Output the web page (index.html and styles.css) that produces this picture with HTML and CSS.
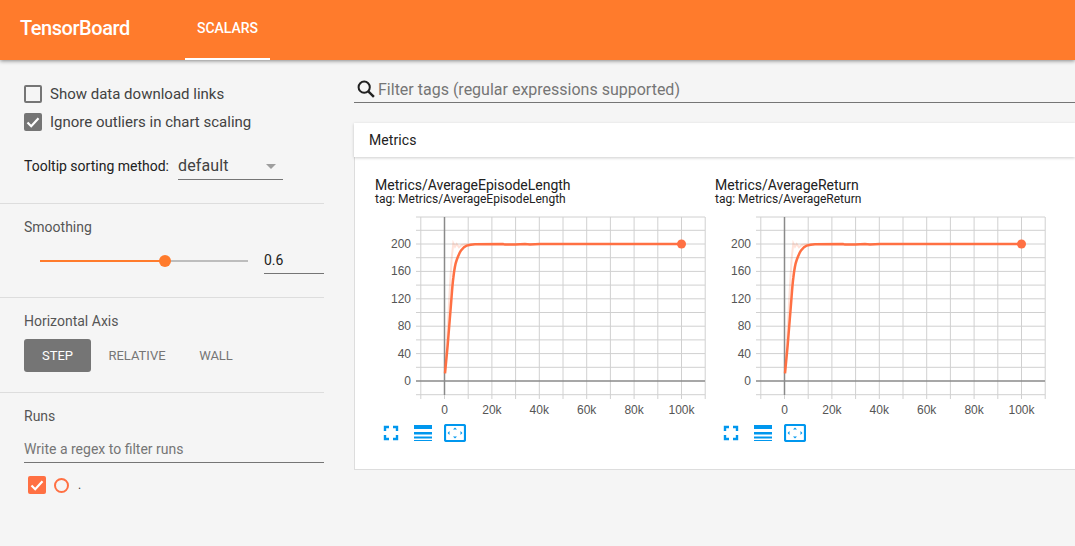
FILE: index.html
```html
<!DOCTYPE html>
<html lang="en">
<head>
    <meta charset="UTF-8">
    <title>TensorBoard</title>
    <link rel="stylesheet" href="styles.css">
</head>
<body>
    <!-- Top bar -->
    <header class="topbar">
        <div class="brand">TensorBoard</div>
        <div class="tab">SCALARS</div>
    </header>

    <div class="page">
        <!-- Sidebar -->
        <aside class="sidebar">
            <section class="side-section options">
                <label class="check-row">
                    <span class="box"></span>
                    <span>Show data download links</span>
                </label>
                <label class="check-row">
                    <span class="box checked">
                        <svg viewBox="0 0 18 18" width="18" height="18"><path d="M3.5 9.5l3.7 3.7 7.3-8" fill="none" stroke="#fff" stroke-width="2.2"/></svg>
                    </span>
                    <span>Ignore outliers in chart scaling</span>
                </label>
                <div class="tooltip-row">
                    <span>Tooltip sorting method:</span>
                    <div class="select">
                        <span>default</span>
                        <span class="arrow"></span>
                    </div>
                </div>
            </section>

            <section class="side-section smoothing">
                <div class="side-title">Smoothing</div>
                <div class="slider-row">
                    <div class="slider">
                        <div class="slider-fill"></div>
                        <div class="slider-knob"></div>
                    </div>
                    <div class="slider-value">0.6</div>
                </div>
            </section>

            <section class="side-section axis">
                <div class="side-title">Horizontal Axis</div>
                <div class="axis-buttons">
                    <div class="axis-btn active">STEP</div>
                    <div class="axis-btn relative">RELATIVE</div>
                    <div class="axis-btn wall">WALL</div>
                </div>
            </section>

            <section class="side-section runs">
                <div class="side-title">Runs</div>
                <div class="runs-filter">Write a regex to filter runs</div>
                <div class="run-row">
                    <span class="run-box">
                        <svg viewBox="0 0 18 18" width="18" height="18"><path d="M3.5 9.5l3.7 3.7 7.3-8" fill="none" stroke="#fff" stroke-width="2.2"/></svg>
                    </span>
                    <span class="run-dot"></span>
                    <span class="run-name">.</span>
                </div>
            </section>
        </aside>

        <!-- Main -->
        <main class="main">
            <div class="filter-bar">
                <svg class="search-icon" viewBox="0 0 20 20" width="20" height="20"><circle cx="8.2" cy="8.2" r="5.6" fill="none" stroke="#212121" stroke-width="2"/><path d="M12.3 12.3l5.6 5.6" stroke="#212121" stroke-width="2.4"/></svg>
                <span>Filter tags (regular expressions supported)</span>
            </div>

            <div class="card-head">Metrics</div>
            <div class="card-body">
                <div class="chart">
                    <div class="chart-title">Metrics/AverageEpisodeLength</div>
                    <div class="chart-tag">tag: Metrics/AverageEpisodeLength</div>
                    <svg class="plot" viewBox="0 0 340 196" width="340" height="196">
                        <path class="grid" d="M45.8 5V187M69.5 5V187M93.2 5V187M116.9 5V187M140.6 5V187M164.3 5V187M188 5V187M211.7 5V187M235.4 5V187M259.1 5V187M282.8 5V187M306.5 5V187M330.2 5V187M41 5H330M41 18.3H330M41 32H330M41 45.7H330M41 59.4H330M41 73.1H330M41 86.8H330M41 100.5H330M41 114.2H330M41 127.9H330M41 141.6H330M41 155.3H330M41 182.7H330"/>
                        <path class="axis-line" d="M69.5 5V183M41 169H330"/>
                        <path class="raw" d="M70 161.3L72.5 120 75 73 76.7 46 78.3 31.3 80 34.7 81.7 32 84 35.3 86.7 33 90 32.5 100 32 128 32 130 32.8 135 32.4 150 32 306.5 32"/>
                        <path class="line" d="M70 161.3L72.7 133 75.7 96C76.8 83 77.2 74 78.3 66 79.2 58 80.2 52 81.7 48 83 44.5 84.5 40.5 86 38.5 88 36 89.5 34.5 91.7 33.7 94 32.9 97 32.3 100 32.2L128 32 130 32.6 140 32.4 150 32 155 32.4 165 32 306.5 32"/>
                        <circle class="end-dot" cx="306.5" cy="32" r="4.5"/>
                        <g class="y-labels">
                            <text x="36" y="36">200</text>
                            <text x="36" y="63">160</text>
                            <text x="36" y="91">120</text>
                            <text x="36" y="118">80</text>
                            <text x="36" y="145.5">40</text>
                            <text x="36" y="173">0</text>
                        </g>
                        <g class="x-labels">
                            <text x="69.5" y="202">0</text>
                            <text x="116.9" y="202">20k</text>
                            <text x="164.3" y="202">40k</text>
                            <text x="211.7" y="202">60k</text>
                            <text x="259.1" y="202">80k</text>
                            <text x="306.5" y="202">100k</text>
                        </g>
                    </svg>
                    <div class="chart-tools">
                        <svg class="tool tool-full" viewBox="0 0 16 16" width="16" height="16"><path d="M2 6V2H6M10 2H14V6M14 10V14H10M6 14H2V10" fill="none" stroke="#0097ee" stroke-width="2.4"/></svg>
                        <svg class="tool" viewBox="0 0 18 16" width="18" height="16"><path d="M0 0H18V4H0ZM0 7H18V9.5H0ZM0 11.5H18V13.5H0ZM0 15H18V16H0Z" fill="#0097ee"/></svg>
                        <svg class="tool" viewBox="0 0 22 18" width="22" height="18"><rect x="1" y="1" width="20" height="16" rx="1.5" fill="none" stroke="#0097ee" stroke-width="2.2"/><path d="M9 5.5L11 3.6 13 5.5ZM9 12.5L11 14.4 13 12.5ZM5.5 7L3.6 9 5.5 11ZM16.5 7L18.4 9 16.5 11Z" fill="#0097ee"/></svg>
                    </div>
                </div>

                <div class="chart">
                    <div class="chart-title">Metrics/AverageReturn</div>
                    <div class="chart-tag">tag: Metrics/AverageReturn</div>
                    <svg class="plot" viewBox="0 0 340 196" width="340" height="196">
                        <path class="grid" d="M45.8 5V187M69.5 5V187M93.2 5V187M116.9 5V187M140.6 5V187M164.3 5V187M188 5V187M211.7 5V187M235.4 5V187M259.1 5V187M282.8 5V187M306.5 5V187M330.2 5V187M41 5H330M41 18.3H330M41 32H330M41 45.7H330M41 59.4H330M41 73.1H330M41 86.8H330M41 100.5H330M41 114.2H330M41 127.9H330M41 141.6H330M41 155.3H330M41 182.7H330"/>
                        <path class="axis-line" d="M69.5 5V183M41 169H330"/>
                        <path class="raw" d="M70 161.3L72.5 120 75 73 76.7 46 78.3 31.3 80 34.7 81.7 32 84 35.3 86.7 33 90 32.5 100 32 128 32 130 32.8 135 32.4 150 32 306.5 32"/>
                        <path class="line" d="M70 161.3L72.7 133 75.7 96C76.8 83 77.2 74 78.3 66 79.2 58 80.2 52 81.7 48 83 44.5 84.5 40.5 86 38.5 88 36 89.5 34.5 91.7 33.7 94 32.9 97 32.3 100 32.2L128 32 130 32.6 140 32.4 150 32 155 32.4 165 32 306.5 32"/>
                        <circle class="end-dot" cx="306.5" cy="32" r="4.5"/>
                        <g class="y-labels">
                            <text x="36" y="36">200</text>
                            <text x="36" y="63">160</text>
                            <text x="36" y="91">120</text>
                            <text x="36" y="118">80</text>
                            <text x="36" y="145.5">40</text>
                            <text x="36" y="173">0</text>
                        </g>
                        <g class="x-labels">
                            <text x="69.5" y="202">0</text>
                            <text x="116.9" y="202">20k</text>
                            <text x="164.3" y="202">40k</text>
                            <text x="211.7" y="202">60k</text>
                            <text x="259.1" y="202">80k</text>
                            <text x="306.5" y="202">100k</text>
                        </g>
                    </svg>
                    <div class="chart-tools">
                        <svg class="tool tool-full" viewBox="0 0 16 16" width="16" height="16"><path d="M2 6V2H6M10 2H14V6M14 10V14H10M6 14H2V10" fill="none" stroke="#0097ee" stroke-width="2.4"/></svg>
                        <svg class="tool" viewBox="0 0 18 16" width="18" height="16"><path d="M0 0H18V4H0ZM0 7H18V9.5H0ZM0 11.5H18V13.5H0ZM0 15H18V16H0Z" fill="#0097ee"/></svg>
                        <svg class="tool" viewBox="0 0 22 18" width="22" height="18"><rect x="1" y="1" width="20" height="16" rx="1.5" fill="none" stroke="#0097ee" stroke-width="2.2"/><path d="M9 5.5L11 3.6 13 5.5ZM9 12.5L11 14.4 13 12.5ZM5.5 7L3.6 9 5.5 11ZM16.5 7L18.4 9 16.5 11Z" fill="#0097ee"/></svg>
                    </div>
                </div>
            </div>
        </main>
    </div>
</body>
</html>
```

FILE: styles.css
```css
html, body {
    margin: 0;
    height: 100%;
    overflow: hidden;
}

body {
    font-family: Roboto, sans-serif;
    font-size: 14px;
    color: #212121;
    background-color: #f5f5f5;
}

/* Top bar */
.topbar {
    position: relative;
    z-index: 1;
    display: flex;
    height: 60px;
    padding-left: 20px;
    background-color: #ff7b2c;
    color: #fff;
    box-shadow: 0 1px 4px rgba(0, 0, 0, 0.45);
}

.brand {
    width: 165px;
    font-size: 20px;
    font-weight: 500;
    letter-spacing: -0.45px;
    line-height: 56px;
}

.tab {
    box-sizing: border-box;
    width: 85px;
    height: 60px;
    border-bottom: 2px solid #fff;
    font-size: 14px;
    font-weight: 500;
    line-height: 56px;
    text-align: center;
}

.page {
    display: flex;
    height: 486px;
}

/* Sidebar */
.sidebar {
    flex: none;
    width: 324px;
    margin-right: 16px;
    color: #424242;
}

.side-section {
    box-sizing: border-box;
    padding-left: 24px;
    border-bottom: 1px solid #ddd;
}

.side-title {
    line-height: 18px;
    color: #555;
}

.options {
    height: 144px;
    padding-top: 25px;
}

.check-row {
    display: flex;
    align-items: center;
    gap: 8px;
    height: 18px;
    margin-bottom: 10px;
    font-size: 15px;
}

.box {
    box-sizing: border-box;
    width: 18px;
    height: 18px;
    border: 2px solid #757575;
    border-radius: 2px;
}

.box.checked {
    border: 0;
    background-color: #757575;
}

.box svg, .run-box svg {
    display: block;
}

.tooltip-row {
    display: flex;
    align-items: center;
    gap: 9px;
    margin-top: 21px;
    color: #212121;
}

.select {
    box-sizing: border-box;
    display: flex;
    align-items: center;
    justify-content: space-between;
    width: 105px;
    height: 28px;
    padding-right: 7px;
    border-bottom: 1px solid #757575;
    font-size: 16px;
    letter-spacing: 0.15px;
    color: #424242;
}

.arrow {
    width: 0;
    height: 0;
    margin-top: 1px;
    border-top: 5px solid #9e9e9e;
    border-left: 5px solid transparent;
    border-right: 5px solid transparent;
}

.smoothing {
    height: 94px;
    padding-top: 14px;
}

.slider-row {
    display: flex;
    align-items: flex-start;
    margin-top: 10px;
}

.slider {
    position: relative;
    width: 208px;
    height: 2px;
    margin: 14px 16px 0;
    background-color: #bdbdbd;
}

.slider-fill {
    width: 60%;
    height: 2px;
    background-color: #ff7b2c;
}

.slider-knob {
    position: absolute;
    left: 119px;
    top: -5px;
    width: 12px;
    height: 12px;
    border-radius: 50%;
    background-color: #ff7b2c;
}

.slider-value {
    box-sizing: border-box;
    width: 60px;
    height: 28px;
    border-bottom: 1px solid #757575;
    font-size: 14px;
    line-height: 28px;
    color: #212121;
}

.axis {
    height: 95px;
    padding-top: 14px;
}

.axis-buttons {
    display: flex;
    margin-top: 9px;
}

.axis-btn {
    height: 33px;
    font-size: 13px;
    line-height: 33px;
    text-align: center;
    color: #757575;
}

.axis-btn.active {
    width: 67px;
    border-radius: 3px;
    background-color: #757575;
    color: #fff;
}

.axis-btn.relative {
    width: 92px;
}

.axis-btn.wall {
    width: 66px;
}

.runs {
    padding-top: 14px;
    border-bottom: 0;
}

.runs-filter {
    box-sizing: border-box;
    height: 28px;
    margin-top: 10px;
    padding-top: 1px;
    border-bottom: 1px solid #757575;
    line-height: 26px;
    color: #757575;
}

.run-row {
    display: flex;
    align-items: center;
    height: 18px;
    margin: 13px 0 0 4px;
}

.run-box {
    width: 18px;
    height: 18px;
    border-radius: 2px;
    background-color: #ff7043;
}

.run-dot {
    box-sizing: border-box;
    width: 15px;
    height: 15px;
    margin-left: 8px;
    border: 2px solid #ff7043;
    border-radius: 50%;
}

.run-name {
    margin-left: 9px;
    font-size: 12px;
}

/* Main */
.main {
    flex: 1;
    min-width: 0;
    padding: 16px 0 0 14px;
}

.filter-bar {
    box-sizing: border-box;
    display: flex;
    align-items: center;
    gap: 2px;
    height: 27px;
    padding-left: 2px;
    border-bottom: 1px solid #757575;
    font-size: 16px;
    color: #757575;
}

.card-head {
    position: relative;
    height: 34px;
    margin-top: 20px;
    padding-left: 15px;
    background-color: #fff;
    box-shadow: 0 1px 3px rgba(0, 0, 0, 0.2);
    font-size: 14px;
    letter-spacing: 0.1px;
    line-height: 34px;
    color: #212121;
}

.card-body {
    box-sizing: border-box;
    display: flex;
    height: 313px;
    padding: 21px 0 0 20px;
    background-color: #fff;
    border-left: 1px solid #ddd;
    border-bottom: 1px solid #ddd;
}

.chart {
    flex: none;
    width: 340px;
}

.chart-title {
    font-size: 14px;
    line-height: 14px;
    color: #212121;
}

.chart-tag {
    font-size: 12px;
    line-height: 14px;
    color: #212121;
}

.plot {
    display: block;
    overflow: visible;
    margin-top: 6px;
}

.grid {
    fill: none;
    stroke: #d0d0d0;
    stroke-width: 1;
}

.axis-line {
    fill: none;
    stroke: #8a8a8a;
    stroke-width: 1.5;
}

.raw {
    fill: none;
    stroke: #ff7043;
    stroke-width: 2;
    opacity: 0.2;
}

.line {
    fill: none;
    stroke: #ff7043;
    stroke-width: 2.5;
}

.end-dot {
    fill: #ff7043;
}

.y-labels text, .x-labels text {
    font-family: "Liberation Sans", Arial, sans-serif;
    font-size: 12px;
    fill: #555;
}

.y-labels text {
    text-anchor: end;
}

.x-labels text {
    text-anchor: middle;
}

.chart-tools {
    display: flex;
    align-items: center;
    gap: 12px;
    margin: 16px 0 0 8px;
}

.tool {
    display: block;
}

.tool-full {
    margin-right: 3px;
}
```
